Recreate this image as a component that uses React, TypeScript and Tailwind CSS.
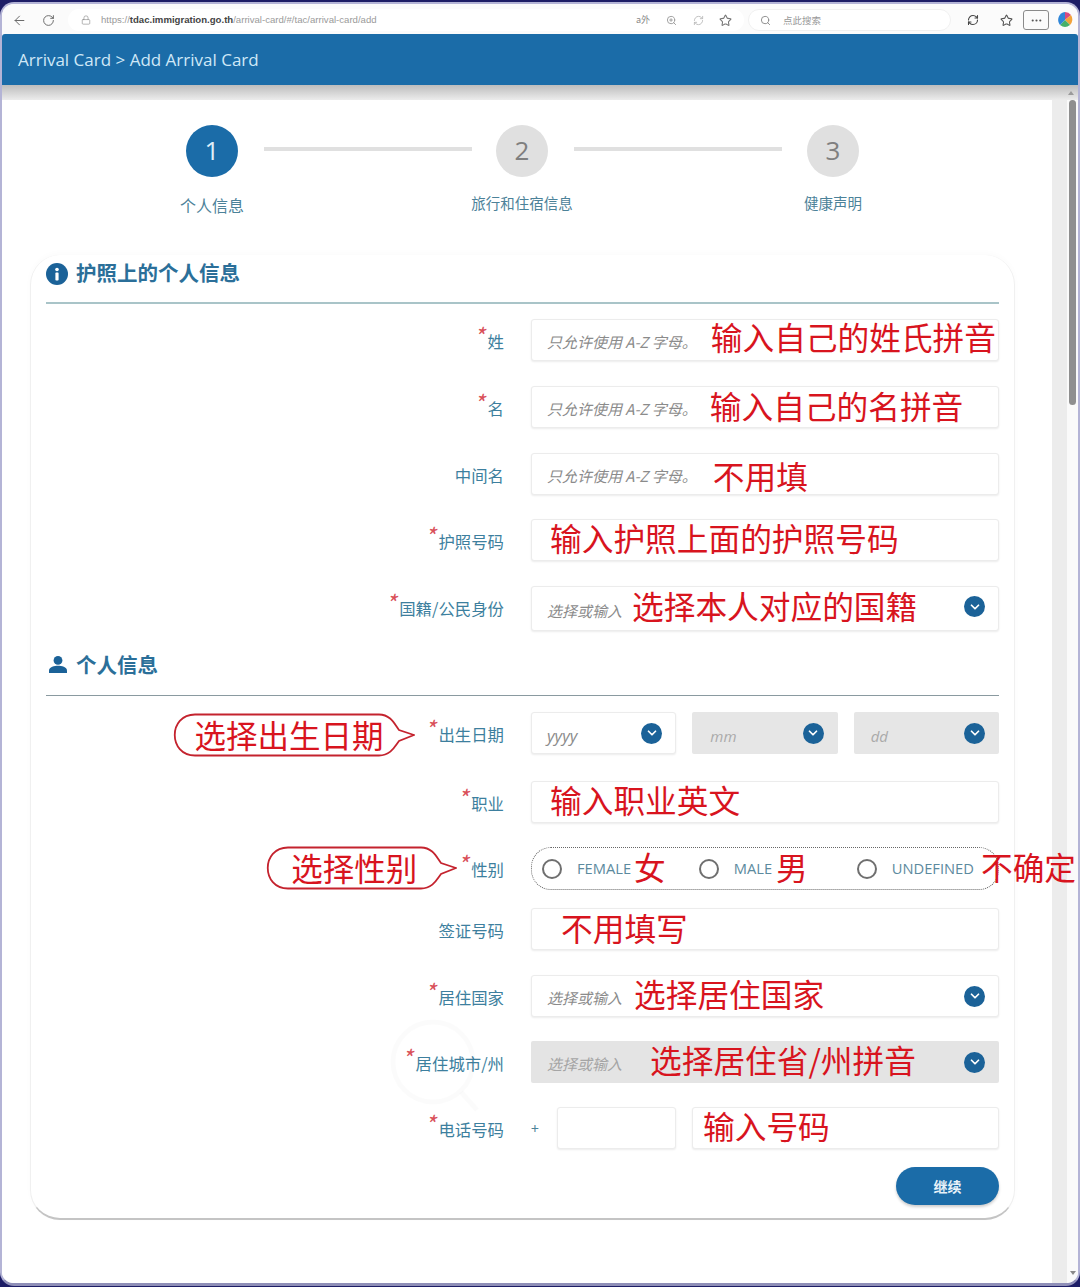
import { ArrowLeft, RotateCw, Lock, ZoomIn, RefreshCw, Star, Search, ChevronDown, MoreHorizontal } from "lucide-react";

const cjk = "font-['Noto_Sans_CJK_SC','Noto_Sans',sans-serif]";

function Label({ text, required }: { text: string; required?: boolean }) {
    return (
        <span className="flex items-start text-[16.4px] leading-[22px] text-[#3d7f9e]">
            {required && <span className="-mt-[6px] w-[10px] -translate-x-[4px] text-[23px] italic text-[#d9505a]">*</span>}
            {text}
        </span>
    );
}

function Note({ children, className = "" }: { children: string; className?: string }) {
    return <span className={`pb-[8px] text-[31.7px] leading-[40px] whitespace-nowrap text-[#d8141e] ${className}`}>{children}</span>;
}

function Field({ children, className = "" }: { children?: React.ReactNode; className?: string }) {
    return (
        <div className={`flex h-[42px] items-center rounded-[3px] border border-[#ececec] bg-white shadow-[0_1px_2px_rgba(0,0,0,0.08)] ${className}`}>
            {children}
        </div>
    );
}

function Hint({ children }: { children: string }) {
    return <span className="pt-[5px] text-[15px] italic text-[#8b8b8b] whitespace-nowrap">{children}</span>;
}

function Chevron({ className = "" }: { className?: string }) {
    return (
        <span className={`ml-auto flex h-[21px] w-[21px] shrink-0 items-center justify-center rounded-full bg-[#1b6298] ${className}`}>
            <ChevronDown size={14} strokeWidth={3} className="text-white" />
        </span>
    );
}

function Row({ label, required, before, className = "", children }: {
    label?: string;
    required?: boolean;
    before?: React.ReactNode;
    className?: string;
    children: React.ReactNode;
}) {
    return (
        <div className={`flex items-start ${className}`}>
            <div className="flex h-[42px] w-[458px] shrink-0 items-center justify-end pt-[1px]">
                {before}
                {label && <Label text={label} required={required} />}
            </div>
            <div className="ml-[27px] w-[468px]">{children}</div>
        </div>
    );
}

function Callout({ text, width, tail, className, textLeft }: { text: string; width: number; tail: number; className: string; textLeft: string }) {
    return (
        <div className={`relative h-[44px] ${className}`} style={{ width }}>
            <svg className="absolute inset-0" width={width} height={44} fill="none">
                <path
                    d={`M22 1.5 H${width - tail - 20} C${width - tail - 8} 1.5 ${width - tail - 4} 12 ${width - tail} 17 L${width - 1} 22 L${width - tail} 28 C${width - tail - 4} 33 ${width - tail - 8} 42.5 ${width - tail - 20} 42.5 H22 C-5 42.5 -5 1.5 22 1.5 Z`}
                    stroke="#c4232e"
                    strokeWidth="1.8"
                    fill="white"
                />
            </svg>
            <span className={`absolute top-[1px] text-[31.5px] leading-[40px] whitespace-nowrap text-[#d8141e] ${textLeft}`}>{text}</span>
        </div>
    );
}

function Step({ n, label, active }: { n: number; label: string; active?: boolean }) {
    return (
        <div className="flex w-[120px] flex-col items-center">
            <div className={`flex h-[52px] w-[52px] items-center justify-center rounded-full pb-[2px] text-[26px] ${active ? "bg-[#1b6ca8] text-[#dfeefa]" : "bg-[#e0e0e0] text-[#7f7f7f]"} font-['Open_Sans',sans-serif]`}>
                {n}
            </div>
            <span className={`whitespace-nowrap text-[#4c8299] ${active ? "mt-[16px] text-[16px] leading-[24px]" : "mt-[15px] text-[14.5px] leading-[22px]"}`}>{label}</span>
        </div>
    );
}

function Radio({ label, note, className = "", gap = "ml-[3px]" }: { label: string; note: string; className?: string; gap?: string }) {
    return (
        <div className={`flex items-center ${className}`}>
            <span className="h-[20px] w-[20px] shrink-0 rounded-full border-2 border-[#6f6f6f]" />
            <span className="ml-[15px] font-['Open_Sans',sans-serif] text-[14.7px] text-[#5c8a9e]">{label}</span>
            <Note className={`pt-[2px] ${gap}`}>{note}</Note>
        </div>
    );
}

export default function App() {
    return (
        <div className={`h-[1287px] w-[1080px] overflow-hidden bg-[#1d1d66] pt-[2px] pb-[1px] ${cjk}`}>
            <div className="flex h-full flex-col overflow-hidden rounded-[14px] border-x-[2px] border-t-[2px] border-b-[3px] border-x-[#b4b4d6] border-t-[#b4b4d6] border-b-[#8f8fb8] bg-white">
                {/* Browser toolbar */}
                <div className="flex h-[30px] shrink-0 items-center bg-[#fbfbfb] pt-[2px] pl-[10px] text-[#6b6b6b]">
                    <ArrowLeft size={15} strokeWidth={1.6} />
                    <RotateCw size={13} strokeWidth={1.8} className="ml-[15px]" />
                    <div className="ml-[13px] flex h-[22px] w-[676px] items-center rounded-full bg-white pl-[13px]">
                        <Lock size={10} strokeWidth={1.5} className="text-[#8a8a8a]" />
                        <span className="ml-[10px] font-['Liberation_Sans',sans-serif] text-[9.6px] text-[#9a9a9a]">
                            https://<span className="font-bold text-[#444]">tdac.immigration.go.th</span>/arrival-card/#/tac/arrival-card/add
                        </span>
                        <span className="ml-auto text-[9px] text-[#888]">a外</span>
                        <ZoomIn size={11} className="ml-[16px] text-[#999]" />
                        <RefreshCw size={11} className="ml-[16px] text-[#bbb]" />
                        <Star size={13} className="ml-[15px] mr-[12px] text-[#777]" />
                    </div>
                    <div className="ml-[4px] flex h-[22px] w-[203px] items-center rounded-full border border-[#f0f0f0] bg-white pl-[11px]">
                        <Search size={11} className="text-[#888]" />
                        <span className="ml-[12px] text-[9.5px] text-[#999]">点此搜索</span>
                    </div>
                    <RefreshCw size={12} strokeWidth={2.2} className="ml-[16px] text-[#444]" />
                    <Star size={13} className="ml-[21px] text-[#555]" />
                    <div className="ml-[10px] flex h-[20px] w-[26px] items-center justify-center rounded-[3px] border border-[#8a8a8a]">
                        <MoreHorizontal size={13} className="text-[#555]" />
                    </div>
                    <svg className="ml-[8px]" width="16" height="16" viewBox="0 0 16 16">
                        <path d="M8 0a8 8 0 0 1 6 3L8 8z" fill="#d8497f" />
                        <path d="M14 3a8 8 0 0 1-1 10L8 8z" fill="#f2a33a" />
                        <path d="M13 13a8 8 0 0 1-10 0l5-5z" fill="#46b06a" />
                        <path d="M3 13A8 8 0 0 1 8 0v8z" fill="#2f86d8" />
                    </svg>
                </div>

                {/* Page header */}
                <div className="z-10 flex h-[51px] shrink-0 items-center rounded-t-[3px] bg-[#1b6ca8] pl-[16px] font-['Open_Sans',sans-serif] text-[17px] text-[#cfe8f7]">
                    Arrival Card &gt; Add Arrival Card
                </div>
                <div className="flex h-[15px] shrink-0 items-center justify-end bg-gradient-to-b from-[#bdbdbd] to-[#ececec] pr-[4px]">
                    <span className="h-0 w-0 border-x-[3px] border-b-[4px] border-x-transparent border-b-[#9a9a9a]" />
                </div>

                <div className="flex min-h-0 flex-1">
                    <div className="relative w-[1050px] shrink-0 bg-white">
                        {/* Stepper */}
                        <div className="mt-[25px] flex pl-[150px]">
                            <Step n={1} label="个人信息" active />
                            <div className="ml-[-8px] mt-[22px] h-[4px] w-[208px] bg-[#e0e0e0]" />
                            <div className="ml-[-10px]"><Step n={2} label="旅行和住宿信息" /></div>
                            <div className="ml-[-8px] mt-[22px] h-[4px] w-[208px] bg-[#e0e0e0]" />
                            <div className="ml-[-9px]"><Step n={3} label="健康声明" /></div>
                        </div>

                        {/* Form card */}
                        <div className="ml-[28px] mt-[38px] h-[965px] w-[985px] rounded-[30px] border-x border-b-[2px] border-x-[#f0f0f0] border-b-[#c4c4c4] bg-white pl-[15px] pr-[15px] shadow-[0_-2px_6px_rgba(0,0,0,0.02)]">
                            <div className="flex h-[33px] items-end pb-[2px]">
                                <svg width="22" height="22" viewBox="0 0 22 22" className="mb-[1px]">
                                    <circle cx="11" cy="11" r="11" fill="#1b6298" />
                                    <circle cx="11" cy="6.5" r="1.8" fill="white" />
                                    <rect x="9.4" y="9.6" width="3.2" height="8" rx="0.8" fill="white" />
                                </svg>
                                <span className="ml-[8px] text-[20.5px] leading-[28px] font-bold text-[#2b6f99]">护照上的个人信息</span>
                            </div>
                            <div className="mt-[14px] h-[2px] w-[953px] bg-[#a9c4c8]" />

                            <Row label="姓" required className="mt-[15px]">
                                <Field className="pl-[15px]">
                                    <Hint>只允许使用 A-Z 字母。</Hint>
                                    <Note className="ml-[14px]">输入自己的姓氏拼音</Note>
                                </Field>
                            </Row>
                            <Row label="名" required className="mt-[25px]">
                                <Field className="pl-[15px]">
                                    <Hint>只允许使用 A-Z 字母。</Hint>
                                    <Note className="ml-[13px] pt-[4px]">输入自己的名拼音</Note>
                                </Field>
                            </Row>
                            <Row label="中间名" className="mt-[25px]">
                                <Field className="pl-[15px]">
                                    <Hint>只允许使用 A-Z 字母。</Hint>
                                    <Note className="ml-[16px] pt-[10px]">不用填</Note>
                                </Field>
                            </Row>
                            <Row label="护照号码" required className="mt-[24px]">
                                <Field className="pl-[18px]">
                                    <Note className="pt-[2px]">输入护照上面的护照号码</Note>
                                </Field>
                            </Row>
                            <Row label="国籍/公民身份" required className="mt-[25px]">
                                <Field className="h-[45px] pl-[15px] pr-[13px]">
                                    <Hint>选择或输入</Hint>
                                    <Note className="ml-[10px]">选择本人对应的国籍</Note>
                                    <Chevron className="mb-[4px]" />
                                </Field>
                            </Row>

                            <div className="mt-[18px] flex h-[30px] items-center">
                                <svg width="18" height="17" viewBox="0 0 18 17" className="ml-[3px]">
                                    <circle cx="9" cy="4.4" r="4.4" fill="#1b6298" />
                                    <path d="M0 17v-2.6C0 11 5.5 9.8 9 9.8s9 1.2 9 4.6V17z" fill="#1b6298" />
                                </svg>
                                <span className="ml-[9px] text-[20.5px] font-bold text-[#2b6f99]">个人信息</span>
                            </div>
                            <div className="mt-[16px] h-[1px] w-[953px] bg-[#8a9aa0]" />

                            <Row
                                label="出生日期"
                                required
                                className="mt-[16px]"
                                before={<Callout text="选择出生日期" width={242} tail={16} className="mr-[13px] mt-[2px]" textLeft="left-[21px]" />}
                            >
                                <div className="flex gap-[16px]">
                                    <Field className="w-[146px] pl-[15px] pr-[13px]">
                                        <span className="pt-[6px] font-['Open_Sans',sans-serif] text-[16.5px] italic text-[#8b8b8b]">yyyy</span>
                                        <Chevron />
                                    </Field>
                                    <div className="flex h-[42px] w-[146px] items-center rounded-[2px] bg-[#e6e6e6] pl-[18px] pr-[14px]">
                                        <span className="pt-[6px] font-['Open_Sans',sans-serif] text-[15px] italic text-[#aaa]">mm</span>
                                        <Chevron />
                                    </div>
                                    <div className="flex h-[42px] w-[146px] items-center rounded-[2px] bg-[#e6e6e6] pl-[17px] pr-[14px]">
                                        <span className="pt-[6px] font-['Open_Sans',sans-serif] text-[15px] italic text-[#aaa]">dd</span>
                                        <Chevron />
                                    </div>
                                </div>
                            </Row>
                            <Row label="职业" required className="mt-[27px]">
                                <Field className="pl-[18px]">
                                    <Note className="pt-[1px]">输入职业英文</Note>
                                </Field>
                            </Row>
                            <Row
                                label="性别"
                                required
                                className="mt-[24px]"
                                before={<Callout text="选择性别" width={191} tail={16} className="mr-[4px] -mt-[2px]" textLeft="left-[25px]" />}
                            >
                                <div className="flex h-[43px] w-[468px] items-center rounded-[20px] border border-dotted border-[#666] pl-[10px]">
                                    <Radio label="FEMALE" note="女" />
                                    <Radio label="MALE" note="男" className="ml-[33px]" gap="ml-[4px]" />
                                    <Radio label="UNDEFINED" note="不确定" className="ml-[49px]" gap="ml-[7px]" />
                                </div>
                            </Row>
                            <Row label="签证号码" className="mt-[18px]">
                                <Field className="pl-[29px]">
                                    <Note className="pt-[3px]">不用填写</Note>
                                </Field>
                            </Row>
                            <Row label="居住国家" required className="mt-[25px]">
                                <Field className="pl-[15px] pr-[13px]">
                                    <Hint>选择或输入</Hint>
                                    <Note className="ml-[12px] pt-[2px]">选择居住国家</Note>
                                    <Chevron />
                                </Field>
                            </Row>
                            <Row label="居住城市/州" required className="mt-[24px]">
                                <div className="flex h-[42px] items-center rounded-[2px] bg-[#e4e4e4] pl-[16px] pr-[14px]">
                                    <span className="pt-[5px] text-[15px] italic text-[#a5a5a5]">选择或输入</span>
                                    <Note className="ml-[28px] pt-[2px]">选择居住省/州拼音</Note>
                                    <Chevron />
                                </div>
                            </Row>
                            <Row label="电话号码" required className="mt-[24px]">
                                <div className="flex items-center">
                                    <span className="w-[26px] text-[14px] text-[#4c8299]">+</span>
                                    <Field className="w-[119px]" />
                                    <Field className="ml-[16px] w-[307px] pl-[10px]">
                                        <Note className="pt-[2px]">输入号码</Note>
                                    </Field>
                                </div>
                            </Row>
                            <div className="mt-[18px] flex w-[953px] justify-end">
                                <button className="flex h-[38px] w-[103px] items-center justify-center rounded-full bg-[#1b6ca8] text-[14px] font-bold text-[#e8f2f9] shadow-[0_2px_3px_rgba(0,0,0,0.2)]">
                                    继续
                                </button>
                            </div>
                        </div>

                        {/* Faint watermark */}
                        <svg className="pointer-events-none absolute left-[385px] top-[910px]" width="100" height="110" fill="none" stroke="#000" strokeOpacity="0.015" strokeWidth="5">
                            <circle cx="46" cy="52" r="40" />
                            <path d="M74 82l16 18" />
                        </svg>
                    </div>

                    {/* Scrollbar */}
                    <div className="flex flex-1">
                        <div className="w-[15px] bg-[#ececec]" />
                        <div className="flex flex-1 flex-col bg-[#fafafa] pl-[2px]">
                            <div className="h-[305px] w-[7px] rounded-full bg-[#8f8f8f]" />
                            <span className="ml-[1px] mt-auto mb-[8px] h-0 w-0 border-x-[3px] border-t-[4px] border-x-transparent border-t-[#8a8a8a]" />
                        </div>
                    </div>
                </div>
            </div>
        </div>
    );
}
